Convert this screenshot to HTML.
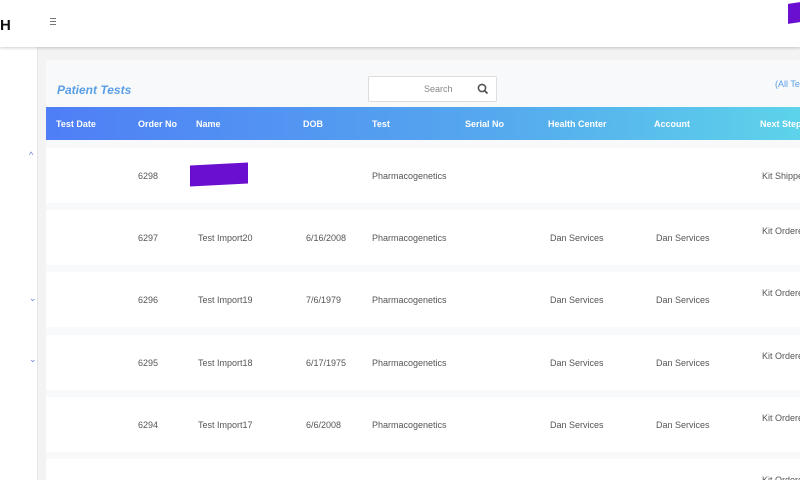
<!DOCTYPE html>
<html style="width:800px;height:480px;overflow:hidden"><head><style>
*{margin:0;padding:0;box-sizing:border-box}
body{width:800px;height:480px;overflow:hidden;background:#f3f3f3;font-family:"Liberation Sans",sans-serif;position:relative}
.hdr{position:absolute;left:0;top:0;width:800px;height:47px;background:#fff;box-shadow:0 1px 3px rgba(0,0,0,.2);z-index:3}
.side{position:absolute;left:0;top:47px;width:38px;height:433px;background:#fff;border-right:1px solid #e6e6e6}
.card{position:absolute;left:46px;top:60px;width:754px;height:420px;background:#f7f9fb}
.th{position:absolute;left:46px;top:107px;width:754px;height:33px;background:linear-gradient(90deg,#4f7ef6,#55a9ee 60%,#5dd3ea);color:#fff;font-size:9px;font-weight:bold}
.row{position:absolute;left:46px;width:754px;height:55px;background:#fff;font-size:9px;color:#555;overflow:hidden}
.c{position:absolute;white-space:nowrap}
.th .c{top:12px}
.row .c{top:23px}
.chev{position:absolute;color:#6a7fd0;font-size:9px;left:29px}
</style></head><body>
<div class="hdr">
<div style="position:absolute;left:0;top:17px;font-size:15px;font-weight:bold;color:#111">H</div>
<div style="position:absolute;left:50px;top:18px;width:6px;height:1px;background:#777;box-shadow:0 3px 0 #777,0 6px 0 #777"></div>
<div style="position:absolute;left:788px;top:3px;width:12px;height:20px;background:#6a0fd0;transform:skewY(-8deg)"></div>
</div>
<div class="side"></div>
<div class="chev" style="top:150px">^</div>
<div class="chev" style="top:293px">⌄</div>
<div class="chev" style="top:354px">⌄</div>
<div class="card"></div>
<div style="position:absolute;left:57px;top:83px;font-size:12px;font-weight:bold;font-style:italic;color:#5a9ee6">Patient Tests</div>
<div style="position:absolute;left:368px;top:76px;width:129px;height:26px;background:#fff;border:1px solid #ddd;border-radius:2px">
<span style="position:absolute;left:55px;top:7px;font-size:9px;color:#888">Search</span>
<svg style="position:absolute;left:108px;top:6px" width="12" height="12" viewBox="0 0 12 12"><circle cx="5" cy="5" r="3.6" fill="none" stroke="#555" stroke-width="1.6"/><path d="M7.6 7.6L10.5 10.5" stroke="#555" stroke-width="1.8"/></svg>
</div>
<div style="position:absolute;left:775px;top:79px;font-size:9px;color:#5a9ee6;white-space:nowrap">(All Tests)</div>
<div class="th">
<span class="c" style="left:10px">Test Date</span><span class="c" style="left:92px">Order No</span><span class="c" style="left:150px">Name</span><span class="c" style="left:257px">DOB</span><span class="c" style="left:326px">Test</span><span class="c" style="left:419px">Serial No</span><span class="c" style="left:502px">Health Center</span><span class="c" style="left:608px">Account</span><span class="c" style="left:714px">Next Steps</span>
</div>
<div class="row" style="top:148px"><span class="c" style="left:92px">6298</span><div style="position:absolute;left:144px;top:16px;width:58px;height:21px;background:#6a0fd0;transform:skewY(-3deg)"></div><span class="c" style="left:326px">Pharmacogenetics</span><span class="c" style="left:716px">Kit Shipped</span></div>
<div class="row" style="top:210px"><span class="c" style="left:92px">6297</span><span class="c" style="left:152px">Test Import20</span><span class="c" style="left:260px">6/16/2008</span><span class="c" style="left:326px">Pharmacogenetics</span><span class="c" style="left:504px">Dan Services</span><span class="c" style="left:610px">Dan Services</span><span class="c" style="left:716px;top:16px">Kit Ordered</span></div>
<div class="row" style="top:272px"><span class="c" style="left:92px">6296</span><span class="c" style="left:152px">Test Import19</span><span class="c" style="left:260px">7/6/1979</span><span class="c" style="left:326px">Pharmacogenetics</span><span class="c" style="left:504px">Dan Services</span><span class="c" style="left:610px">Dan Services</span><span class="c" style="left:716px;top:16px">Kit Ordered</span></div>
<div class="row" style="top:335px"><span class="c" style="left:92px">6295</span><span class="c" style="left:152px">Test Import18</span><span class="c" style="left:260px">6/17/1975</span><span class="c" style="left:326px">Pharmacogenetics</span><span class="c" style="left:504px">Dan Services</span><span class="c" style="left:610px">Dan Services</span><span class="c" style="left:716px;top:16px">Kit Ordered</span></div>
<div class="row" style="top:397px"><span class="c" style="left:92px">6294</span><span class="c" style="left:152px">Test Import17</span><span class="c" style="left:260px">6/6/2008</span><span class="c" style="left:326px">Pharmacogenetics</span><span class="c" style="left:504px">Dan Services</span><span class="c" style="left:610px">Dan Services</span><span class="c" style="left:716px;top:16px">Kit Ordered</span></div>
<div class="row" style="top:459px;height:21px"><span class="c" style="left:716px;top:16px">Kit Ordered</span></div>
</body></html>
